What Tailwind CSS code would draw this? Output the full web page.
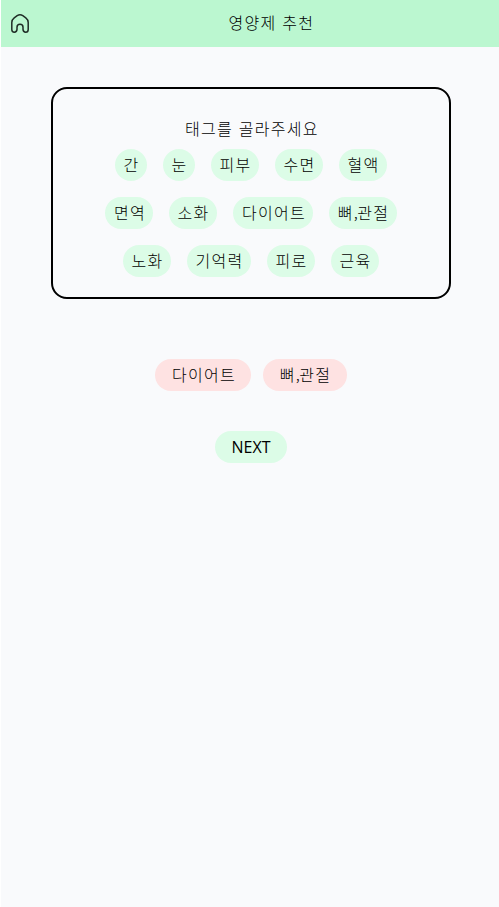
<!DOCTYPE html>
<html lang="ko">
<head>
<meta charset="utf-8">
<title>영양제 추천</title>
<script src="https://cdn.jsdelivr.net/npm/@tailwindcss/browser@4"></script>
</head>
<body class="bg-white pl-px">
<div class="h-[907px] overflow-hidden bg-[#f9fafc] font-['Noto_Sans_CJK_KR',sans-serif] text-base font-light tracking-[1.28px] text-black">
  <header class="flex h-[47px] items-center bg-[#bbf7d0]">
    <a class="flex w-10 shrink-0 pl-[9px]" href="#" aria-label="홈">
      <svg class="size-5" viewBox="0 0 20 20" fill="none" stroke="#1f2d26" stroke-width="1.5" stroke-linejoin="round"><path d="M1.8 8.6C1.8 6.6 2.6 5 4.2 3.8L7.2 1.7C9 .6 11 .6 12.8 1.7L15.8 3.8C17.4 5 18.2 6.6 18.2 8.6V15.4Q18.2 18.2 15.7 18.2Q13.2 18.2 13 15.4V13.2Q13 10.2 10 10.2Q7 10.2 7 13.2V15.4Q6.8 18.2 4.3 18.2Q1.8 18.2 1.8 15.4Z"/></svg>
    </a>
    <h1 class="flex-1 pb-[3px] pl-[3px] text-center leading-6">영양제 추천</h1>
  </header>
  <main class="flex flex-col items-center pt-10 pl-0.5">
    <section class="flex h-[212px] w-[400px] flex-col items-center rounded-2xl border-2 border-black pt-[27px]">
      <p class="mb-[9px] h-6 pl-0.5 leading-6">태그를 골라주세요</p>
      <div class="flex flex-col items-center gap-4">
        <div class="flex gap-4">
          <button class="h-8 w-8 rounded-full bg-[#dcfce7] pb-0.5 pl-px leading-[30px]">간</button>
          <button class="h-8 w-8 rounded-full bg-[#dcfce7] pb-0.5 pl-px leading-[30px]">눈</button>
          <button class="h-8 w-12 rounded-full bg-[#dcfce7] pb-0.5 pl-px leading-[30px]">피부</button>
          <button class="h-8 w-12 rounded-full bg-[#dcfce7] pb-0.5 pl-px leading-[30px]">수면</button>
          <button class="h-8 w-12 rounded-full bg-[#dcfce7] pb-0.5 pl-px leading-[30px]">혈액</button>
        </div>
        <div class="flex gap-4">
          <button class="h-8 w-12 rounded-full bg-[#dcfce7] pb-0.5 pl-0.5 leading-[30px]">면역</button>
          <button class="h-8 w-12 rounded-full bg-[#dcfce7] pb-0.5 pl-px leading-[30px]">소화</button>
          <button class="h-8 w-20 rounded-full bg-[#dcfce7] pb-0.5 pl-0.5 leading-[30px]">다이어트</button>
          <button class="h-8 w-[68px] rounded-full bg-[#dcfce7] pb-0.5 pl-px leading-[30px] whitespace-nowrap">뼈<span class="tracking-[-0.4px]">,</span>관절</button>
        </div>
        <div class="flex gap-4">
          <button class="h-8 w-12 rounded-full bg-[#dcfce7] pb-0.5 pl-px leading-[30px]">노화</button>
          <button class="h-8 w-16 rounded-full bg-[#dcfce7] pb-0.5 pl-px leading-[30px]">기억력</button>
          <button class="h-8 w-12 rounded-full bg-[#dcfce7] pb-0.5 pl-px leading-[30px]">피로</button>
          <button class="h-8 w-12 rounded-full bg-[#dcfce7] pb-0.5 pl-px leading-[30px]">근육</button>
        </div>
      </div>
    </section>
    <div class="mt-[60px] flex gap-3">
      <button class="h-8 w-24 rounded-full bg-[#fee2e2] pb-0.5 pl-0.5 leading-[30px]">다이어트</button>
      <button class="h-8 w-[84px] rounded-full bg-[#fee2e2] pb-0.5 pl-px leading-[30px] whitespace-nowrap">뼈<span class="tracking-[-0.4px]">,</span>관절</button>
    </div>
    <button class="mt-10 h-8 w-[72px] rounded-full bg-[#dcfce7] font-['Open_Sans',sans-serif] leading-8 font-normal tracking-normal">NEXT</button>
  </main>
</div>
</body>
</html>
